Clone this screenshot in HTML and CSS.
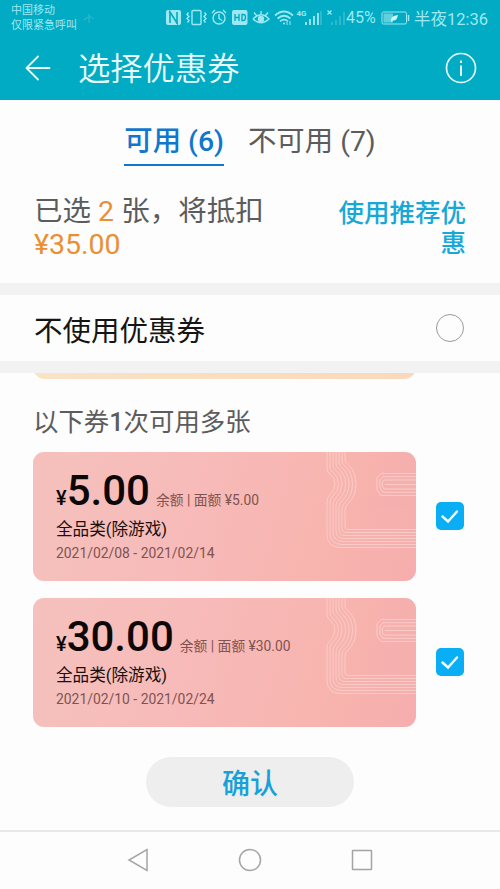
FILE: index.html
```html
<!DOCTYPE html>
<html lang="zh-CN">
<head>
<meta charset="utf-8">
<title>选择优惠券</title>
<link rel="stylesheet" href="styles.css">
</head>
<body>
<svg class="defs" width="0" height="0" aria-hidden="true">
  <symbol id="lines" viewBox="0 0 90 129">
    <g fill="none" stroke="#fbd3ce" stroke-width="1" opacity=".8">
      <path d="M1 0V17Q1 20 4 22Q9 26 9 32Q9 38 4 43Q1 46 1 49V82Q1 95.500 15 95.500H90"/>
      <path d="M4 0V16Q4 18 7 20Q12.500 25 12.500 32Q12.500 39 7 44Q4 47 4 50V81Q4 92.500 16 92.500H90"/>
      <path d="M7 0V14Q7 16 10 18.500Q16 24 16 32Q16 40 10 46Q7 49 7 52V80Q7 89.500 17 89.500H90"/>
      <path d="M10 0V12Q10 15 13 17Q19.500 23 19.500 32Q19.500 41 13 47.500Q10 50 10 53V79Q10 86.500 18 86.500H90"/>
      <path d="M13 0V11Q13 13 16 15.500Q23 22 23 32Q23 42 16 49Q13 52 13 55V78Q13 83.500 19 83.500H90"/>
      <path d="M16 0V9Q16 12 19 14Q26.500 21 26.500 32Q26.500 43 19 50.500Q16 53 16 56V77Q16 80.500 20 80.500H90"/>
      <path d="M19 0V8Q19 10 22 12.500Q30 20 30 32Q30 44 22 52Q19 55 19 57V74Q19 77.500 22 77.500H90"/>
      <path d="M90 21.500H55L51 26V38L55 43.500H90M90 24.700H57L54 28V36L57 40.300H90M90 28H58L56.500 30V35L58 37H90M90 32.500H59"/>
    </g>
  </symbol>
</svg>

<header class="top">
  <div class="status">
    <div class="carrier">中国移动<br>仅限紧急呼叫</div>
    <svg class="ghost" width="14" height="12" viewBox="0 0 14 12"><path d="M2 8Q8 2 12 7M7 2v9" fill="none" stroke="#5cc7d7" stroke-width="1.200" opacity=".5"/></svg>
    <svg class="icons" width="182" height="20" viewBox="0 0 182 20" fill="none" stroke="#9ee8f2" stroke-width="1.400">
      <rect x="1" y="2" width="15" height="15" rx="2" fill="#9ee8f2" stroke="none"/>
      <path d="M5 15V4L12 15V4M4 4l2 1M11 15l2 0" stroke="#00abc3" stroke-width="1.600"/>
      <rect x="27" y="2.500" width="9" height="14" rx="1"/>
      <path d="M23.500 4.500l-1.500 2 2 2-2 2 2 2-1.500 2M39.500 4.500l1.500 2-2 2 2 2-2 2 1.500 2"/>
      <circle cx="54" cy="10" r="6"/><path d="M54 6v4.500l3 2M47 5l3-3M61 5l-3-3"/>
      <rect x="67" y="2" width="15.500" height="15" rx="2" fill="#9ee8f2" stroke="none"/>
      <path d="M70 6v7M74 6v7M70 9.500h4M77 6.500v6h1.500q2 0 2-3t-2-3z" stroke="#00abc3"/>
      <path d="M88 11Q96 2.500 104 11Q96 18.500 88 11M89 4.500l2.500 3M96 3v3.500M103 4.500l-2.500 3"/>
      <circle cx="96" cy="11" r="2.500" fill="#9ee8f2"/>
      <path d="M110 7.500Q119 -.5 128 7.500M112.500 10.500Q119 5 125.500 10.500M115 13.300Q119 10 123 13.300" stroke-width="1.700"/>
      <circle cx="119" cy="15.500" r="1" fill="#9ee8f2" stroke="none"/><path d="M122 17v-3M125 17v-4" stroke-width="1"/>
      <path d="M141 17v-3M145 17v-6M149 17v-9M153 17V5" stroke-width="1.800"/>
      <path d="M156 17V3M167 17v-3M171 17v-5M175 17V8M179 17V4" stroke="#3dbfd1" stroke-width="1.500"/>
      <path d="M162.500 2.500l4 4M166.500 2.500l-4 4" stroke-width="1.200"/>
      <text x="131.500" y="8" class="g4">4G</text>
    </svg>
    <span class="pct">45%</span>
    <svg class="battery" width="30" height="14" viewBox="0 0 30 14"><rect x="1" y="1" width="24.500" height="12" rx="1.500" fill="none" stroke="#9ee8f2"/><rect x="2.500" y="2.500" width="9.500" height="9" fill="#5fd0dc"/><path d="M10 10Q9 5 17 4Q16 10 12 9.500L10 11Z" fill="#c8f7fa"/><path d="M27.500 4v6" stroke="#9ee8f2" stroke-width="1.500"/></svg>
    <span class="time">半夜12:36</span>
  </div>
  <div class="titlebar">
    <svg width="26" height="26" viewBox="0 0 26 26" fill="none" stroke="#e9fdff" stroke-width="1.800" stroke-linecap="round" stroke-linejoin="round"><path d="M24.500 13H1.500M13 1.500L1.500 13L13 24.500"/></svg>
    <h1>选择优惠券</h1>
    <svg class="info" width="32" height="32" viewBox="0 0 32 32" fill="none" stroke="#e9fdff" stroke-width="1.700"><circle cx="16" cy="16" r="14.500"/><path d="M16 13.500V24M16 8.500v2.500" stroke-width="2"/></svg>
  </div>
</header>

<nav class="tabs">
  <span class="tab active">可用 (6)</span>
  <span class="tab">不可用 (7)</span>
</nav>

<section class="summary">
  <p class="picked">已选 <b>2</b> 张，将抵扣<br><b class="total">¥35.00</b></p>
  <p class="recommend">使用推荐优惠</p>
</section>

<section class="none"><span>不使用优惠券</span><i class="radio"></i></section>

<main class="list">
  <div class="peek"><div class="peek-card"></div></div>
  <h2>以下券<span>1</span>次可用多张</h2>
  <div class="row">
    <article class="card">
      <svg class="deco" width="90" height="129"><use href="#lines"/></svg>
      <div class="amount"><small>¥</small><strong>5.00</strong><span>余额 | 面额 ¥5.00</span></div>
      <div class="name">全品类(除游戏)</div>
      <div class="date">2021/02/08 - 2021/02/14</div>
    </article>
    <svg class="check" width="28" height="28" viewBox="0 0 28 28"><rect width="28" height="28" rx="5" fill="#09aef5"/><path d="M6.500 14.500L12 19.500L21 9.500" fill="none" stroke="#fff" stroke-width="2.400" stroke-linecap="round"/></svg>
  </div>
  <div class="row">
    <article class="card">
      <svg class="deco" width="90" height="129"><use href="#lines"/></svg>
      <div class="amount"><small>¥</small><strong>30.00</strong><span>余额 | 面额 ¥30.00</span></div>
      <div class="name">全品类(除游戏)</div>
      <div class="date">2021/02/10 - 2021/02/24</div>
    </article>
    <svg class="check" width="28" height="28" viewBox="0 0 28 28"><rect width="28" height="28" rx="5" fill="#09aef5"/><path d="M6.500 14.500L12 19.500L21 9.500" fill="none" stroke="#fff" stroke-width="2.400" stroke-linecap="round"/></svg>
  </div>
  <button class="confirm">确认</button>
</main>

<footer class="navbar">
  <svg width="22" height="24" viewBox="0 0 22 24"><path d="M20 1.500V22.500L2 12Z"/></svg>
  <svg width="24" height="24" viewBox="0 0 24 24"><circle cx="12" cy="12" r="10.500"/></svg>
  <svg width="22" height="22" viewBox="0 0 22 22"><rect x="1.500" y="1.500" width="19" height="19" rx=".5"/></svg>
</footer>
</body>
</html>
```
FILE: styles.css
```css
* { box-sizing: border-box; margin: 0; padding: 0; }
body {
  width: 500px;
  height: 889px;
  overflow: hidden;
  display: flex;
  flex-direction: column;
  background: #fdfdfd;
  font-family: Roboto, "Noto Sans CJK SC", sans-serif;
  color: #5c5c5c;
}
svg { display: block; flex: none; }
.defs { position: absolute; }
.top { height: 100px; background: #00abc3; flex: none; }
.status { height: 35px; display: flex; align-items: center; color: #9ee8f2; white-space: nowrap; }
.carrier { width: 70px; margin-left: 11px; font-size: 11px; line-height: 15px; font-weight: 400; }
.ghost { margin: 0 69px 0 1px; }
.g4 { font-size: 8px; font-weight: 700; fill: #9ee8f2; stroke: none; }
.pct { width: 32px; margin-left: -1px; font-size: 16px; }
.battery { margin-left: 3px; }
.time { margin-left: 3px; font-size: 16.500px; font-weight: 400; }
.titlebar { height: 65px; display: flex; align-items: center; padding: 0 23px 0 25px; }
.titlebar h1 { margin-left: 27px; padding-top: 2px; font-size: 32.300px; line-height: 40px; font-weight: 350; color: #e9fdff; }
.info { margin-left: auto; }
.tabs { height: 66px; display: flex; justify-content: center; gap: 24px; padding-top: 21px; flex: none; }
.tab { height: 45px; font-size: 28.400px; line-height: 41px; white-space: nowrap; }
.active { color: #0f77ce; font-weight: 500; border-bottom: 2px solid #0f77ce; }
.summary { height: 117px; padding: 29px 34px 0; display: flex; justify-content: space-between; flex: none; }
.picked { font-size: 28.500px; line-height: 33px; }
.picked b { font-weight: 400; color: #ea8f34; }
.recommend { width: 130px; padding-top: 3px; text-align: right; font-size: 25.500px; line-height: 30px; font-weight: 500; color: #18a8d8; }
.none {
  height: 90px;
  flex: none;
  display: flex;
  align-items: center;
  justify-content: space-between;
  padding: 0 36px 0 34px;
  border-top: 12px solid #f2f2f2;
  border-bottom: 12px solid #f2f2f2;
  font-size: 28.500px;
  color: #151515;
}
.radio { width: 28px; height: 28px; border: 1px solid #9b9b9b; border-radius: 50%; }
.list { height: 457px; flex: none; padding-left: 33px; }
.peek { height: 6px; overflow: hidden; }
.peek-card { width: 383px; height: 36px; margin-top: -30px; border-radius: 12px; background: linear-gradient(90deg, #fae3c5, #fad8bb); }
.list h2 { height: 73px; padding-top: 24px; font-size: 25.400px; line-height: 38px; font-weight: 400; }
.list h2 span { font-weight: 500; }
.row { height: 129px; margin-bottom: 17px; display: flex; align-items: center; gap: 20px; }
.check { margin-bottom: 1px; }
.card {
  position: relative;
  width: 383px;
  height: 129px;
  padding: 17px 0 0 23px;
  border-radius: 11px;
  background: linear-gradient(105deg, #f5c1bc 0%, #f7bbb9 40%, #f8b4af 75%, #f5aead 100%);
  overflow: hidden;
}
.deco { position: absolute; right: 0; top: 0; }
.amount { height: 48px; display: flex; align-items: baseline; line-height: 44px; color: #0e0707; white-space: nowrap; }
.amount small { font-size: 20px; font-weight: 500; }
.amount strong { font-size: 42px; font-weight: 500; }
.amount span { margin-left: 6px; font-size: 13.800px; color: #7e5351; }
.name { font-size: 16.600px; line-height: 26px; color: #1b1010; }
.date { font-size: 13.900px; line-height: 20px; color: #7e5351; }
.confirm {
  display: block;
  width: 208px;
  height: 50px;
  margin: 30px 0 0 113px;
  padding-top: 5px;
  border: 0;
  border-radius: 25px;
  background: #eee;
  font: 500 28px/45px Roboto, "Noto Sans CJK SC", sans-serif;
  color: #18a0d8;
}
.row:last-of-type { margin-bottom: 0; }
.navbar { height: 59px; flex: none; border-top: 2px solid #e8e8e8; display: flex; align-items: center; justify-content: center; gap: 89px; padding-bottom: 2px; }
.navbar svg { fill: none; stroke: #a5a5a5; stroke-width: 1.500; }
```
